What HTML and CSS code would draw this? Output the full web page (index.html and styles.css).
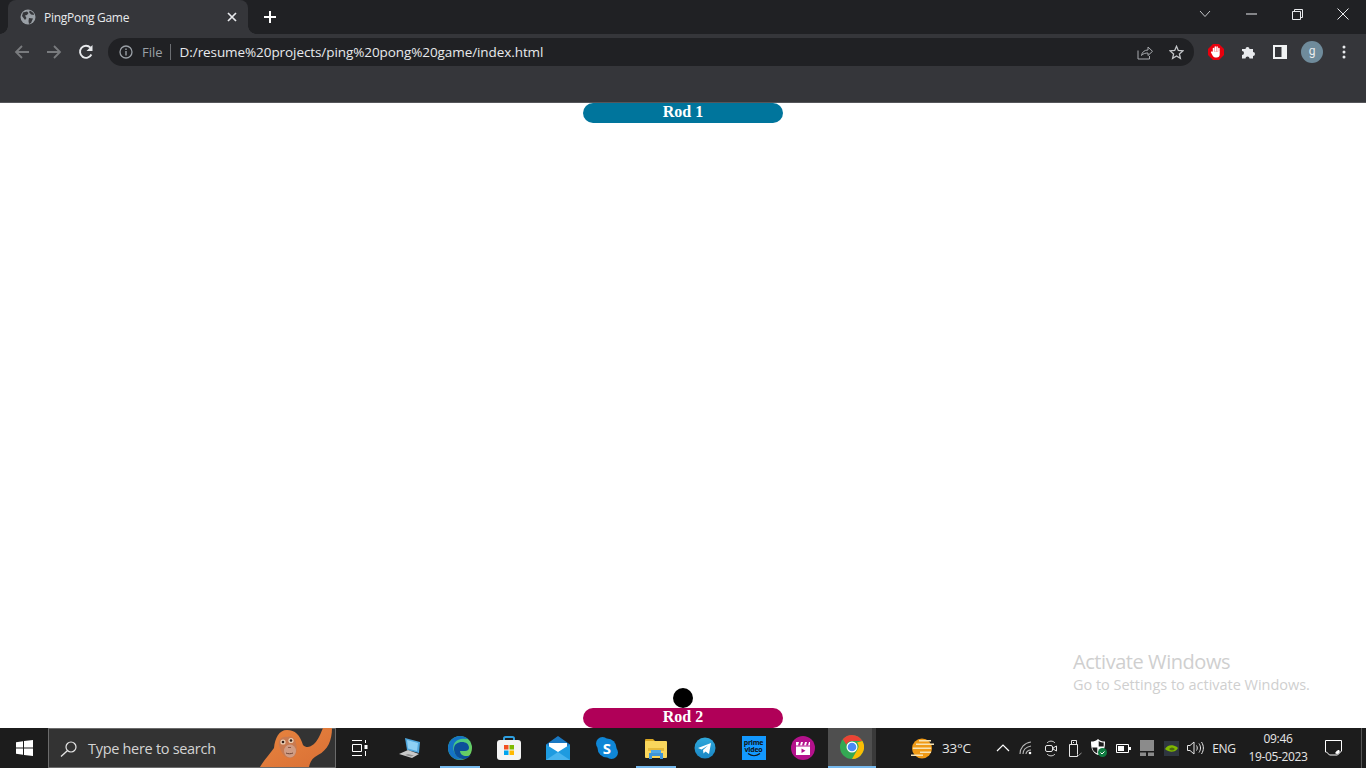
FILE: index.html
```html
<!DOCTYPE html>
<html lang="en">
<head>
<meta charset="utf-8">
<title>PingPong Game</title>
<link rel="stylesheet" href="styles.css">
</head>
<body>
<header class="chrome">
  <div class="tabstrip">
    <div class="tab">
      <svg class="favicon" width="16" height="16" viewBox="0 0 16 16"><circle cx="8" cy="8" r="7.5" fill="#9aa0a6"/><path d="M3 3.500 7 2.500 8.500 4 7 6 5 6.500 6.500 9 5 11 2 7zM10 1.500l3.500 2.500.5 2-3-.5-2-2.500zM9 9l4 .5-2 4.500-2 1-.5-3z" fill="#35363a"/></svg>
      <span class="tab-title">PingPong Game</span>
      <svg class="tab-close" width="10" height="10" viewBox="0 0 10 10"><path d="M1 1l8 8M9 1l-8 8" stroke="#e8eaed" stroke-width="1.700"/></svg>
    </div>
    <div class="newtab"><svg width="14" height="14" viewBox="0 0 14 14"><path d="M7 1v12M1 7h12" stroke="#fff" stroke-width="2"/></svg></div>
    <div class="winctrls">
      <div class="winbtn"><svg width="12" height="8" viewBox="0 0 12 8"><path d="M1 1l5 5.500 5-5.500" fill="none" stroke="#c4c6c9" stroke-width="1"/></svg></div>
      <div class="winbtn"><svg width="11" height="2" viewBox="0 0 11 2"><path d="M0 1h11" stroke="#e8eaed" stroke-width="1"/></svg></div>
      <div class="winbtn"><svg width="11" height="11" viewBox="0 0 11 11"><path d="M.5 2.500h8v8h-8zM2.500 2.500v-2h8v8h-2" fill="none" stroke="#e8eaed"/></svg></div>
      <div class="winbtn"><svg width="12" height="12" viewBox="0 0 12 12"><path d="M.5.500l11 11M11.500.500l-11 11" stroke="#e8eaed" stroke-width="1"/></svg></div>
    </div>
  </div>
  <div class="toolbar">
    <div class="tbtn"><svg width="16" height="16" viewBox="0 0 16 16"><path d="M15 8H2M8 2 2 8l6 6" fill="none" stroke="#797b7e" stroke-width="1.800"/></svg></div>
    <div class="tbtn"><svg width="16" height="16" viewBox="0 0 16 16"><path d="M1 8h13M8 2l6 6-6 6" fill="none" stroke="#797b7e" stroke-width="1.800"/></svg></div>
    <div class="tbtn"><svg width="16" height="16" viewBox="0 0 16 16"><path d="M13.400 10.500A6 6 0 1 1 12.400 3.700" fill="none" stroke="#e8eaed" stroke-width="1.900"/><path d="M14.500 1v6h-6z" fill="#e8eaed"/></svg></div>
    <div class="omnibox">
      <svg class="info" width="14" height="14" viewBox="0 0 14 14"><circle cx="7" cy="7" r="6" fill="none" stroke="#9aa0a6" stroke-width="1.300"/><path d="M7 6v4.500M7 3.500v1.500" stroke="#9aa0a6" stroke-width="1.400"/></svg>
      <span class="scheme">File</span>
      <span class="sep"></span>
      <span class="url">D:/resume%20projects/ping%20pong%20game/index.html</span>
      <svg class="share" width="16" height="15" viewBox="0 0 16 15"><path d="M1 5.500V14h11.500v-3M4.500 10.500c.5-3.500 3-5.500 6.500-5.500V2l4.500 4.300L11 10.500V8C8.500 8 6 8.500 4.500 10.500z" fill="none" stroke="#a8abaf" stroke-width="1"/></svg>
      <svg class="star" width="15" height="15" viewBox="0 0 15 15"><path d="M7.500 1.300 9.300 5.500l4.600.4-3.500 3 1 4.500-3.900-2.400-3.900 2.400 1-4.500-3.500-3 4.600-.4z" fill="none" stroke="#c4c6c9" stroke-width="1.300"/></svg>
    </div>
    <div class="tbtn"><svg width="16" height="16" viewBox="0 0 16 16"><path d="M5 0h6l5 5v6l-5 5H5l-5-5V5z" fill="#e8000d"/><path d="M5.500 8V4.500M7.300 7V3M9.100 7V3M10.900 7.500V4.500" fill="none" stroke="#fff" stroke-width="1.500" stroke-linecap="round"/><path d="M4.700 7.500h7v3c0 2-1.200 3-3 3H7.300c-1.500 0-2.200-1-3-2.500L3 8.500c-.4-.8.6-1.500 1.200-.8z" fill="#fff"/></svg></div>
    <div class="tbtn"><svg width="16" height="16" viewBox="-1 0 16 16"><path d="M1 5h3.500a2 2 0 1 1 4 0H12v3a2 2 0 1 1 0 4v2.500H8.500a2 2 0 1 0-4 0H1V11a2 2 0 1 0 0-4z" fill="#e8eaed"/></svg></div>
    <div class="tbtn"><svg width="14" height="14" viewBox="0 0 14 14"><path d="M0 0h14v14H0zM2 2v10h6.500V2z" fill="#f1f3f4" fill-rule="evenodd"/></svg></div>
    <div class="tbtn"><span class="avatar">g</span></div>
    <div class="tbtn"><svg width="4" height="14" viewBox="0 0 4 14"><circle cx="2" cy="2" r="1.500" fill="#e8eaed"/><circle cx="2" cy="7" r="1.500" fill="#e8eaed"/><circle cx="2" cy="12" r="1.500" fill="#e8eaed"/></svg></div>
  </div>
  <div class="bookmarks"></div>
</header>

<main class="page">
  <div class="rod rod-top">Rod 1</div>
  <div class="bottom-play">
    <div class="ball"></div>
    <div class="rod rod-bottom">Rod 2</div>
  </div>
  <div class="watermark">
    <div class="wm-title">Activate Windows</div>
    <div class="wm-sub">Go to Settings to activate Windows.</div>
  </div>
</main>

<footer class="taskbar">
  <div class="start"><svg width="17" height="16" viewBox="0 0 17 16"><path d="M0 2.300 7 1.200V7.500H0zM8 1 17 0v7.500H8zM0 8.500h7v6.300L0 13.700zM8 8.500h9V16l-9-1.100z" fill="#fff"/></svg></div>
  <div class="search">
    <svg class="search-ico" width="17" height="16" viewBox="0 0 17 16"><circle cx="11" cy="6" r="5" fill="none" stroke="#e6e6e6" stroke-width="1.200"/><path d="M7.300 9.700 1 15.500" stroke="#e6e6e6" stroke-width="1.300"/></svg>
    <span class="search-text">Type here to search</span>
    <svg class="ape" width="76" height="39" viewBox="259 728 76 39">
      <defs><linearGradient id="ag" x1="0" y1="0" x2="1" y2="1"><stop offset="0" stop-color="#e8853f"/><stop offset="1" stop-color="#d96f35"/></linearGradient></defs>
      <path d="M260 767C264 760 270 754 274 748 275 738 279 730 287 730 295 730 300 735 303 745 308 750 315 745 319 737 321 733 322 730 323 728L332 728C332 740 328 750 318 755 312 758 310 762 309 767z" fill="url(#ag)"/>
      <path d="M279 745C278 739 283 736 287 737 291 735 296 738 296 744 298 750 296 758 290 758 284 758 281 752 279 745z" fill="#c97a50"/>
      <ellipse cx="290" cy="751" rx="6" ry="6.500" fill="#cf9c84"/>
      <circle cx="283" cy="742" r="2.600" fill="#ecd0b5"/><circle cx="291" cy="740.500" r="2.600" fill="#ecd0b5"/>
      <circle cx="283" cy="742" r="1.300" fill="#32201a"/><circle cx="291" cy="740.500" r="1.300" fill="#32201a"/>
      <path d="M286 753c2 1 5 1 7 0" fill="none" stroke="#6e4434" stroke-width="1"/>
      <path d="M288 747.500h3" stroke="#8f5a44" stroke-width="1"/>
    </svg>
  </div>
  <div class="tasks">
    <div class="task task-view"><svg width="16" height="16" viewBox="0 0 16 16"><path d="M0 .500h10M0 15.500h10M.500 4.500h9v7h-9z" fill="none" stroke="#fff"/><path d="M13 0h1v3h-1zM12.500 5h3v4h-3zM13 11h1v5h-1z" fill="#fff"/></svg></div>
    <div class="task task-laptop"><svg width="24" height="22" viewBox="0 0 24 22"><path d="M7 1l15 4-1 11-12-3z" fill="#4fa6dc"/><path d="M9 3l11 3-1 8-9-2.500z" fill="#8ed0f4"/><path d="M1 17l9-4 11 4-7 4z" fill="#c9c9c9"/><path d="M7 18l3-1 6 1.500-3 1z" fill="#8f8f8f"/></svg></div>
    <div class="task active-run"><svg width="24" height="24" viewBox="0 0 24 24"><defs><linearGradient id="eg" x1="0" y1="0" x2="1" y2="1"><stop offset="0" stop-color="#2fc2a0"/><stop offset="1" stop-color="#7ad24f"/></linearGradient></defs><circle cx="12" cy="12" r="12" fill="url(#eg)"/><path d="M0 12C0 5 6 0 12 0c3 0 6 1 8 3-6-1-12 0-14 5-2 4 0 13 9 15.500C7 25 0 20 0 12z" fill="#1473c5"/><path d="M6 13c0-5 4-7 8-7 4 0 7 2 7 6 0 2-2 3-4 3h-5c0 3 3 5 6 5 2 0 4-.5 5-1.500-1.500 3-5 5-8.500 4.500C9 22 6 18 6 13z" fill="#0c4f9a"/></svg></div>
    <div class="task"><svg width="24" height="24" viewBox="0 0 24 24"><path d="M7 6V2.500Q7 1 8.500 1h7Q17 1 17 2.500V6" fill="none" stroke="#2e9fe0" stroke-width="2"/><rect y="4" width="24" height="20" rx="3" fill="#f4f4f4"/><path d="M7 9h4.500v4.500H7z" fill="#f25022"/><path d="M12.500 9H17v4.500h-4.500z" fill="#7fba00"/><path d="M7 14.500h4.500V19H7z" fill="#00a4ef"/><path d="M12.500 14.500H17V19h-4.500z" fill="#ffb900"/></svg></div>
    <div class="task"><svg width="24" height="24" viewBox="0 0 24 24"><path d="M12 0 24 8.500V24H0V8.500z" fill="#1a78c2"/><path d="M3 7h18v6l-9 5-9-5z" fill="#fff"/><path d="M0 8.500 12 16l12-7.500V24H0z" fill="#1e9be0"/><path d="M0 24 12 16l12 8z" fill="#48b4ee"/></svg></div>
    <div class="task"><svg width="22" height="22" viewBox="0 0 22 22"><circle cx="6.500" cy="6.500" r="6.500" fill="#0f86d6"/><circle cx="15.500" cy="15.500" r="6.500" fill="#0f86d6"/><circle cx="11" cy="11" r="9.500" fill="#0f86d6"/><text x="11" y="16.500" class="skype-s">S</text></svg></div>
    <div class="task active-run"><svg width="22" height="22" viewBox="0 0 22 22"><path d="M0 3Q0 2 1 2h7l2 2v3H0z" fill="#d9a520"/><rect y="4" width="22" height="17" rx="1" fill="#f9d65c"/><path d="M3 11h16v3H3z" fill="#e5b93a"/><path d="M4 16h14v6h-3v-3H7v3H4z" fill="#3f95d8"/><path d="M6 13h10v3H6z" fill="#4fa8e8"/></svg></div>
    <div class="task"><svg width="22" height="22" viewBox="0 0 22 22"><defs><linearGradient id="tg" x1="0" y1="0" x2="0" y2="1"><stop offset="0" stop-color="#2fa9dc"/><stop offset="1" stop-color="#1a86c4"/></linearGradient></defs><circle cx="11" cy="11" r="10.500" fill="url(#tg)"/><path d="M4 11l13-5-2 11-3.500-2.500-2 2-.5-3.500 5-4.500-6.500 4z" fill="#fff"/></svg></div>
    <div class="task"><div class="prime"><span class="prime-a">prime</span><span class="prime-b">video</span><svg width="14" height="4" viewBox="0 0 14 4"><path d="M1 .500c4 3 8 3 12 0" fill="none" stroke="#111" stroke-width="1.100"/></svg></div></div>
    <div class="task task-clip"><svg width="24" height="24" viewBox="0 0 24 24"><circle cx="12" cy="12" r="12" fill="#b4118b"/><path d="M5 6h14v3.500H5z" fill="#fff"/><path d="M8 6h2l-1 3.500H7zM12 6h2l-1 3.500h-2zM16 6h2l-1 3.500h-2z" fill="#b4118b"/><path d="M5 10.500h14V19H5z" fill="#fff"/><path d="M10.500 12.500v4.500l4-2.200z" fill="#b4118b"/></svg></div>
    <div class="task task-chrome"><svg width="24" height="24" viewBox="0 0 24 24"><circle cx="12" cy="12" r="12" fill="#34a853"/><path d="M12 0a12 12 0 0 1 10.400 6H12a6 6 0 0 0-5.600 3.700L2.800 4.300A12 12 0 0 1 12 0z" fill="#ea4335"/><path d="M22.400 6A12 12 0 0 1 12 24l5.200-9A6 6 0 0 0 17 7.500z" fill="#fbbc04"/><circle cx="12" cy="12" r="5.500" fill="#fff"/><circle cx="12" cy="12" r="4.300" fill="#4a8af4"/></svg></div>
  </div>
  <div class="tray">
    <div class="weather">
      <svg width="23" height="21" viewBox="0 0 23 21"><circle cx="11" cy="10.500" r="10" fill="#f09a16"/><path d="M8 2h12v1.500H8zM5 5.500h18V7H5zM2 9.500h13V11H2zM11 9.500h9V11h-9zM9 13.500h11V15H9zM0 16.500h12V18H0z" fill="#f7e3b4"/></svg>
      <span class="temp">33°C</span>
    </div>
    <div class="tray-ico"><svg width="14" height="8" viewBox="0 0 14 8"><path d="M1 7l6-6 6 6" fill="none" stroke="#fff" stroke-width="1.200"/></svg></div>
    <div class="tray-ico"><svg width="16" height="14" viewBox="0 0 16 14"><path d="M1 13C1 7 5 2 12 1M4 13c0-4 3-7 8-8M7 13c0-2 2-4 5-4" fill="none" stroke="#b9b9b9" stroke-width="1.100"/><circle cx="11" cy="12" r="1.300" fill="#fff"/></svg></div>
    <div class="tray-ico"><svg width="12" height="17" viewBox="0 0 12 17"><path d="M2 3c2-2.500 6-2.500 8 0M2 14c2 2.500 6 2.500 8 0" fill="none" stroke="#cfcfcf"/><rect x=".500" y="5.500" width="7" height="6" rx="1.500" fill="none" stroke="#e6e6e6"/><path d="M8 8l3.500-2v5L8 9z" fill="none" stroke="#e6e6e6"/></svg></div>
    <div class="tray-ico"><svg width="14" height="17" viewBox="0 0 14 17"><path d="M3.500.500h5v4h-5zM1.500 4.500h8v12h-8z" fill="none" stroke="#e6e6e6"/><path d="M5 2h1v1H5z" fill="#e6e6e6"/><path d="M9 14l1.500 1.500L13.500 13" fill="none" stroke="#9a9a9a"/></svg></div>
    <div class="tray-ico"><svg width="16" height="18" viewBox="0 0 16 18"><path d="M7 0C5 2 3 2.500 0 2.500 0 9 1 13.500 7 16c6-2.500 7-7 7-13.500-3 0-5-.5-7-2.500z" fill="#fff"/><path d="M7.700 2v5.500h5V3.500c-2 0-3.500-.5-5-1.500zM1.200 8.500C1.700 11 3 13 6.300 14.500v-6z" fill="#1c1c1c"/><circle cx="11.500" cy="13.500" r="4.500" fill="#107c41"/><path d="M9.500 13.500l1.500 1.500 2.500-2.500" fill="none" stroke="#fff"/></svg></div>
    <div class="tray-ico"><svg width="15" height="9" viewBox="0 0 15 9"><path d="M.5.500h12v8H.5z" fill="none" stroke="#fff"/><path d="M2 2h6v5H2z" fill="#fff"/><path d="M13 3h2v3h-2z" fill="#fff"/></svg></div>
    <div class="tray-ico"><svg width="14" height="16" viewBox="0 0 14 16"><path d="M0 0h14v11H0z" fill="#8b8b8b"/><path d="M0 12.500h6V16H0zM8 12.500h6V16H8z" fill="#8b8b8b"/></svg></div>
    <div class="tray-ico"><svg width="15" height="15" viewBox="0 0 15 15"><path d="M0 0h15v15H0z" fill="#2f3640"/><path d="M1 8c2-4 7-5 12-2 1 .700 1 1.500 0 2.500-3 3-8 3-12-.5z" fill="#7fb800"/><path d="M5 8c2-2 4-2 6 0-2 2-4 2-6 0z" fill="#4c6a10"/></svg></div>
    <div class="tray-ico"><svg width="17" height="14" viewBox="0 0 17 14"><path d="M.500 4.500H3L7 1v12L3 9.500H.500z" fill="none" stroke="#e6e6e6"/><path d="M9.500 4.500c1 1.500 1 3.500 0 5M12 2.500c2 3 2 6 0 9M14.500 1c2.500 4 2.500 8 0 12" fill="none" stroke="#e6e6e6"/></svg></div>
    <span class="lang">ENG</span>
    <div class="clock"><span>09:46</span><span>19-05-2023</span></div>
    <div class="notif"><svg width="17" height="16" viewBox="0 0 17 16"><path d="M.500.500h16v10.500l-4 4h-8l-3-3H.500z" fill="none" stroke="#fff"/><path d="M10 13c1-.5 1.500-3 4-3 1 1 1 2 0 3-1 1.500-3 1-4 0z" fill="#fff"/></svg></div>
    <div class="peek"></div>
  </div>
</footer>
</body>
</html>
```
FILE: styles.css
```css
* { box-sizing: border-box; }
html, body { margin: 0; height: 100%; }
body {
  width: 1366px;
  height: 768px;
  overflow: hidden;
  display: flex;
  flex-direction: column;
  background: #fff;
  font-family: "Open Sans", "Noto Sans", sans-serif;
}
svg { display: block; flex: none; }

/* Browser chrome */
.chrome { flex: none; height: 103px; background: #35363a; border-bottom: 1px solid #55565a; }
.tabstrip { height: 34px; background: #202124; display: flex; align-items: stretch; }
.tab {
  position: relative;
  width: 240px;
  margin-left: 8px;
  background: #35363a;
  border-radius: 8px 8px 0 0;
  display: flex;
  align-items: center;
  padding: 0 9px 0 12px;
}
.tab::before, .tab::after {
  content: "";
  position: absolute;
  bottom: 0;
  width: 8px;
  height: 8px;
}
.tab::before { left: -8px; background: radial-gradient(circle at 0 0, #202124 7.5px, #35363a 8px); }
.tab::after { right: -8px; background: radial-gradient(circle at 100% 0, #202124 7.5px, #35363a 8px); }
.favicon { margin-right: 8px; }
.tab-title { flex: 1; font-size: 12px; letter-spacing: -0.28px; color: #e8eaed; white-space: nowrap; }
.tab-close { margin-right: 2px; }
.newtab { width: 36px; margin-left: 4px; display: flex; align-items: center; justify-content: center; }
.winctrls { margin-left: auto; display: flex; }
.winbtn { width: 46px; height: 28px; display: flex; align-items: center; justify-content: center; }

.toolbar { height: 34px; padding: 2px 6px 0; display: flex; align-items: center; }
.tbtn { width: 32px; height: 32px; flex: none; display: flex; align-items: center; justify-content: center; }
.omnibox {
  flex: 1;
  height: 28px;
  margin: 0 6px;
  padding: 0 10px 0 11px;
  background: #202124;
  border-radius: 14px;
  display: flex;
  align-items: center;
}
.info { margin-right: 9px; }
.scheme { font-size: 13px; color: #9aa0a6; }
.sep { width: 1px; height: 16px; background: #6b6e72; margin: 0 9px 0 7px; }
.url { flex: 1; font-size: 13.500px; letter-spacing: -0.08px; color: #e8eaed; white-space: nowrap; }
.share { margin-right: 16px; }
.avatar {
  width: 22px;
  height: 22px;
  border-radius: 50%;
  background: #6f8b9b;
  color: #e8eaed;
  font: 12px/20px Roboto, sans-serif;
  text-align: center;
}
.bookmarks { height: 34px; }

/* Game page */
.page {
  position: relative;
  flex: 1;
  min-height: 0;
  display: flex;
  flex-direction: column;
  justify-content: space-between;
  align-items: center;
}
.bottom-play { display: flex; flex-direction: column; align-items: center; }
.rod {
  width: 200px;
  height: 20px;
  border-radius: 10px;
  color: #fff;
  font: bold 16px/18px "Liberation Serif", "Times New Roman", serif;
  text-align: center;
}
.rod-top { background: #00759c; }
.rod-bottom { background: #b00058; }
.ball { width: 20px; height: 20px; border-radius: 50%; background: #000; }
.watermark { position: absolute; left: 1073px; bottom: 34px; color: #cfcfcf; white-space: nowrap; }
.wm-title { font-size: 20px; line-height: 27px; letter-spacing: -0.44px; }
.wm-sub { font-size: 14.500px; line-height: 19px; letter-spacing: -0.02px; }

/* Windows taskbar */
.taskbar { flex: none; height: 40px; background: #1c1c1c; display: flex; align-items: stretch; color: #e6e6e6; }
.start { width: 48px; display: flex; align-items: center; justify-content: center; }
.search {
  position: relative;
  width: 288px;
  background: #333;
  border: 1px solid #6b6b6b;
  display: flex;
  align-items: center;
  padding: 1px 0 0 11px;
}
.search-ico { margin-right: 11px; }
.search-text { font-size: 14.500px; letter-spacing: -0.3px; color: #d4d4d4; }
.ape { position: absolute; right: 0; top: -1px; }
.tasks { display: flex; }
.task { width: 49px; display: flex; align-items: center; justify-content: center; position: relative; }
.task-view { width: 48px; }
.task-laptop { width: 51px; }
.task-clip { width: 50px; padding-right: 1px; }
.active-run::after {
  content: "";
  position: absolute;
  left: 5px;
  right: 4px;
  bottom: 0;
  height: 2px;
  background: #76b9ed;
}
.task-chrome { width: 48px; background: linear-gradient(90deg, #4f4f4f 0 44px, #3a3a3a 44px); border-bottom: 2px solid #76b9ed; }
.skype-s { font: bold 15px "Open Sans", sans-serif; fill: #fff; text-anchor: middle; }
.prime {
  width: 24px;
  height: 24px;
  background: #1399ff;
  display: flex;
  flex-direction: column;
  align-items: center;
  color: #111;
  font-weight: 700;
  line-height: 7px;
  padding-top: 3px;
}
.prime-a, .prime-b { font-size: 7px; letter-spacing: -0.25px; }
.tray { margin-left: auto; display: flex; align-items: center; }
.weather { width: 83px; padding-left: 3px; display: flex; align-items: center; }
.temp { font-size: 13.500px; margin-left: 8px; letter-spacing: -0.2px; }
.tray-ico { width: 24px; height: 40px; display: flex; align-items: center; justify-content: center; }
.lang { width: 34px; text-align: center; font-size: 12px; letter-spacing: -0.3px; }
.clock {
  width: 62px;
  margin: 0 7px 0 6px;
  display: flex;
  flex-direction: column;
  align-items: center;
  font-size: 12px;
  line-height: 18px;
  letter-spacing: -0.35px;
}
.notif { width: 45px; display: flex; justify-content: center; padding-right: 11px; }
.peek { width: 5px; height: 40px; border-left: 1px solid #555; }
```
